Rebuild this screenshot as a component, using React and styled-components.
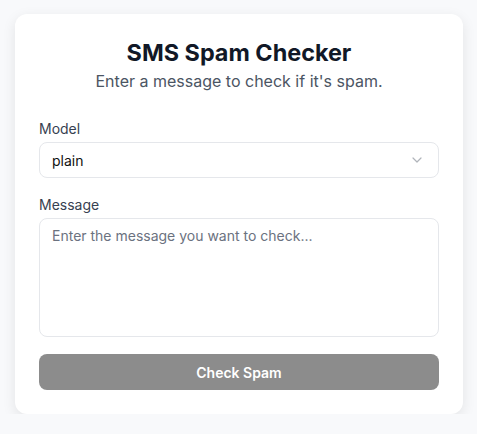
import React from "react";
import styled, { createGlobalStyle } from "styled-components";

const GlobalStyle = createGlobalStyle`
  * { box-sizing: border-box; }
  body {
    margin: 0;
    background: #f8f9fb;
    font-family: Inter, "Noto Sans", sans-serif;
  }
`;

export default function App() {
  return (
    <>
      <GlobalStyle />
      <Page>
        <Card>
          <Header>
            <Title>SMS Spam Checker</Title>
            <Subtitle>Enter a message to check if it's spam.</Subtitle>
          </Header>
          <Field>
            <Label>Model</Label>
            <SelectBox>
              <span>plain</span>
              <svg width="10" height="6" viewBox="0 0 10 6" fill="none" stroke="#b0b4ba" strokeWidth="1.2" strokeLinecap="round" strokeLinejoin="round">
                <path d="M1 1l4 4 4-4" />
              </svg>
            </SelectBox>
          </Field>
          <Field>
            <Label>Message</Label>
            <TextArea placeholder="Enter the message you want to check..." />
          </Field>
          <SubmitButton disabled>Check Spam</SubmitButton>
        </Card>
      </Page>
    </>
  );
}

const Page = styled.div`
  display: flex;
  justify-content: center;
  padding: 14px 14px 0 15px;
`;

const Card = styled.div`
  width: 448px;
  background: #fff;
  border-radius: 12px;
  box-shadow: 0 4px 14px rgba(0, 0, 0, 0.09);
  padding: 23px 24px 24px;
  display: flex;
  flex-direction: column;
`;

const Header = styled.div`
  text-align: center;
  margin-bottom: 26px;
`;

const Title = styled.h1`
  margin: 0;
  font-size: 23.4px;
  line-height: 32px;
  font-weight: 700;
  color: #111827;
`;

const Subtitle = styled.p`
  margin: 0;
  font-size: 16px;
  line-height: 24px;
  color: #4b5563;
`;

const Field = styled.div`
  display: flex;
  flex-direction: column;
  margin-bottom: 17px;
`;

const Label = styled.label`
  font-size: 14px;
  line-height: 20px;
  color: #374151;
  margin-bottom: 3px;
`;

const SelectBox = styled.div`
  height: 36px;
  display: flex;
  align-items: center;
  justify-content: space-between;
  padding: 0 16px 0 12px;
  border: 1px solid #e5e7eb;
  border-radius: 8px;
  font-size: 14px;
  color: #111;
`;

const TextArea = styled.textarea`
  height: 119px;
  resize: none;
  padding: 7px 12px;
  border: 1px solid #e5e7eb;
  border-radius: 8px;
  font-family: Inter, sans-serif;
  font-size: 14px;
  line-height: 20px;
  outline: none;
  &::placeholder { color: #6b7280; }
`;

const SubmitButton = styled.button`
  height: 36px;
  border: none;
  border-radius: 8px;
  background: #8c8c8c;
  color: #fff;
  font-family: Inter, sans-serif;
  font-size: 14px;
  font-weight: 600;
`;
